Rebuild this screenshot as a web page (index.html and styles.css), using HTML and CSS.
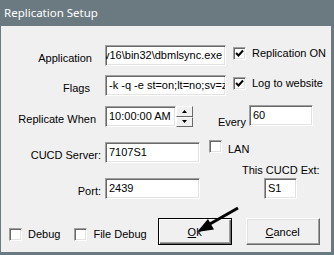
FILE: index.html
```html
<!DOCTYPE html>
<html lang="en">
<head>
  <meta charset="UTF-8">
  <title>Replication Setup</title>
  <link rel="stylesheet" href="styles.css">
</head>
<body>

<div class="window">
  <div class="titlebar">Replication Setup</div>

  <div class="client">
    <div class="row row-app">
      <span class="lbl lbl-app">Application</span>
      <div class="field field-app"><span>v16\bin32\dbmlsync.exe</span></div>
      <span class="check checked"><svg width="9" height="9" viewBox="0 0 9 9"><path d="M1 4 L3.5 6.5 L8 1.5" fill="none" stroke="#000" stroke-width="2"/></svg></span>
      <span class="check-text">Replication ON</span>
    </div>

    <div class="row row-flags">
      <span class="lbl lbl-flags">Flags</span>
      <div class="field field-app">-k -q -e st=on;lt=no;sv=zu</div>
      <span class="check checked"><svg width="9" height="9" viewBox="0 0 9 9"><path d="M1 4 L3.5 6.5 L8 1.5" fill="none" stroke="#000" stroke-width="2"/></svg></span>
      <span class="check-text">Log to website</span>
    </div>

    <div class="row row-when">
      <span class="lbl lbl-when">Replicate When</span>
      <div class="field field-time">10:00:00 AM</div>
      <div class="spin">
        <span class="spin-btn"><svg width="5" height="3" viewBox="0 0 5 3"><path d="M2.5 0 L5 3 L0 3 Z" fill="#000"/></svg></span>
        <span class="spin-btn"><svg width="5" height="3" viewBox="0 0 5 3"><path d="M0 0 L5 0 L2.5 3 Z" fill="#000"/></svg></span>
      </div>
      <span class="lbl-every">Every</span>
      <div class="field field-every">60</div>
    </div>

    <div class="row row-server">
      <span class="lbl lbl-server">CUCD Server:</span>
      <div class="field field-short">7107S1</div>
      <span class="check check-lan"></span>
      <span class="check-text">LAN</span>
    </div>

    <div class="ext-label">This CUCD Ext:</div>

    <div class="row row-port">
      <span class="lbl lbl-server">Port:</span>
      <div class="field field-short">2439</div>
      <div class="field field-ext">S1</div>
    </div>

    <div class="bottom">
      <span class="check check-debug"></span>
      <span class="check-text">Debug</span>
      <span class="check check-filedebug"></span>
      <span class="check-text">File Debug</span>
      <button class="btn btn-default"><u>O</u>k</button>
      <button class="btn btn-cancel"><u>C</u>ancel</button>
    </div>
  </div>

  <svg class="arrow" width="334" height="255" viewBox="0 0 334 255">
    <line x1="238" y1="208" x2="209" y2="224.5" stroke="#000" stroke-width="3"/>
    <polygon points="197,232 214,229.5 208,219" fill="#000"/>
  </svg>
</div>

</body>
</html>
```

FILE: styles.css
```css
/* dialog frame */
body {
  margin: 0;
  padding: 0;
  font-family: 'Liberation Sans', Arial, sans-serif;
  font-size: 11px;
  color: #000;
}
.window {
  position: relative;
  width: 334px;
  height: 255px;
  background-color: #6a7a80;
  display: flex;
  flex-direction: column;
}
.titlebar {
  height: 26px;
  line-height: 25px;
  padding-left: 4px;
  color: #fff;
  font-family: 'Noto Sans', sans-serif;
  font-size: 11.5px;
}
.client {
  margin: 0 3px 3px 1px;
  height: 226px;
  background-color: #f0f0f0;
  padding-top: 19px;
  box-sizing: border-box;
}

/* rows */
.row {
  display: flex;
  align-items: flex-start;
  height: 21px;
}
.row-flags {
  margin-top: 9px;
}
.row-when {
  margin-top: 10px;
}
.row-server {
  margin-top: 15px;
}
.row-port {
  margin-top: 2px;
}
.lbl {
  width: 104px;
  box-sizing: border-box;
  text-align: right;
  padding-top: 6px;
  line-height: 14px;
  white-space: nowrap;
}
.lbl-app {
  padding-right: 13px;
}
.lbl-flags {
  padding-right: 15px;
}
.lbl-when {
  padding-right: 9px;
}
.lbl-server {
  padding-right: 4px;
}

/* sunken fields */
.field {
  box-sizing: border-box;
  height: 21px;
  background-color: #fff;
  border-top: 1px solid #a0a0a0;
  border-left: 1px solid #a0a0a0;
  border-right: 1px solid #fff;
  border-bottom: 1px solid #fff;
  box-shadow: inset 1px 1px 0 #696969, inset -1px -1px 0 #e3e3e3;
  padding: 2px 3px 0;
  line-height: 14px;
  overflow: hidden;
  white-space: nowrap;
}
.field-app {
  width: 121px;
  display: flex;
  justify-content: flex-end;
}
.row-flags .field-app {
  justify-content: flex-start;
}
.field-time {
  width: 71px;
}
.field-every {
  width: 64px;
  margin-top: -1px;
}
.field-short {
  width: 95px;
}
.field-ext {
  width: 33px;
  margin-left: 64px;
}

/* spinner */
.spin {
  display: flex;
  flex-direction: column;
  width: 17px;
  height: 21px;
}
.spin-btn {
  flex: 1;
  display: flex;
  align-items: center;
  justify-content: center;
  background-color: #f0f0f0;
  border-top: 1px solid #fff;
  border-left: 1px solid #fff;
  border-right: 1px solid #696969;
  border-bottom: 1px solid #696969;
}
.lbl-every {
  width: 56px;
  box-sizing: border-box;
  text-align: right;
  padding-right: 3px;
  padding-top: 9px;
  line-height: 14px;
}

/* checkboxes */
.check {
  box-sizing: border-box;
  width: 13px;
  height: 13px;
  background-color: #fff;
  border-top: 1px solid #a0a0a0;
  border-left: 1px solid #a0a0a0;
  border-right: 1px solid #fff;
  border-bottom: 1px solid #fff;
  box-shadow: inset 1px 1px 0 #696969, inset -1px -1px 0 #e3e3e3;
  display: flex;
  align-items: center;
  justify-content: center;
  margin-left: 7px;
  margin-top: 2px;
}
.check-text {
  margin-left: 6px;
  line-height: 14px;
  margin-top: 1px;
  white-space: nowrap;
}
.check-lan {
  margin-left: 9px;
  margin-top: -2px;
}
.row-server .check-text {
  margin-top: 0;
}
.ext-label {
  height: 12px;
  line-height: 12px;
  padding-left: 241px;
  margin-top: 1px;
}

/* bottom row */
.bottom {
  display: flex;
  align-items: center;
  margin-top: 19px;
  height: 27px;
}
.bottom .check {
  margin-top: 5px;
}
.bottom .check-text {
  margin-top: 5px;
}
.check-debug {
  margin-left: 8px;
}
.check-filedebug {
  margin-left: 14px;
}
.btn {
  box-sizing: border-box;
  width: 74px;
  height: 27px;
  padding: 0;
  font-family: 'Liberation Sans', Arial, sans-serif;
  font-size: 11px;
  color: #000;
  background-color: #f0f0f0;
  border: 1px solid;
  border-color: #fff #696969 #696969 #fff;
  box-shadow: inset -1px -1px 0 #a0a0a0, inset 1px 1px 0 #e3e3e3;
}
.btn-default {
  margin-left: 11px;
  border-color: #000;
  box-shadow: inset 1px 1px 0 #fff, inset -1px -1px 0 #696969, inset -2px -2px 0 #a0a0a0;
}
.btn-cancel {
  margin-left: 14px;
}

/* pointer arrow drawn over the dialog */
.arrow {
  position: absolute;
  top: 0;
  left: 0;
  pointer-events: none;
}
```
